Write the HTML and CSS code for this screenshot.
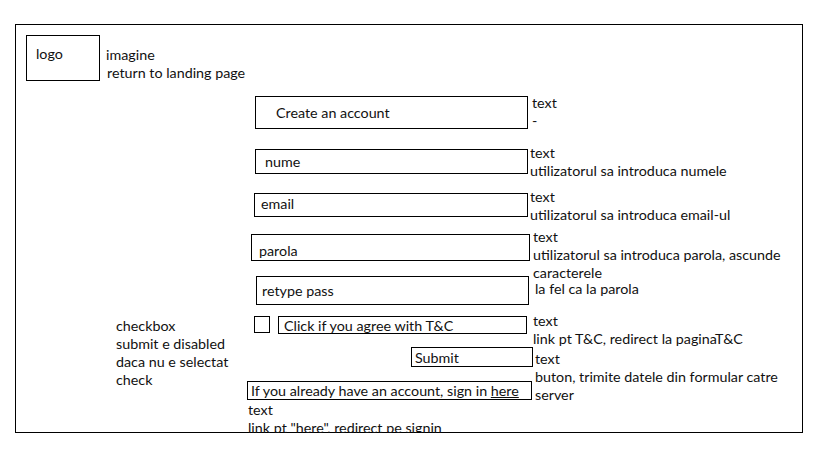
FILE: index.html
```html
<!DOCTYPE html>
<html lang="en">
<head>
<meta charset="UTF-8">
<meta name="viewport" content="width=device-width, initial-scale=1.0">
<link rel="stylesheet" href="styles.css">
<title>Create account - wireframe</title>
</head>
<body>
  <div class="frame">
    <div class="header">
      <div class="logo">logo</div>
      <div class="caption">
        <p>imagine</p>
        <p class="shift">return to landing page</p>
      </div>
    </div>

    <div class="sheet">
      <div class="row row-title">
        <div class="box box-title">Create an account</div>
        <div class="note note-title"><p>text</p><p>-</p></div>
      </div>

      <div class="row row-name">
        <div class="box box-name">nume</div>
        <div class="note note-name"><p>text</p><p>utilizatorul sa introduca numele</p></div>
      </div>

      <div class="row row-email">
        <div class="box box-email">email</div>
        <div class="note note-email"><p>text</p><p>utilizatorul sa introduca email-ul</p></div>
      </div>

      <div class="row row-pass">
        <div class="box box-pass">parola</div>
        <div class="note note-pass"><p>text</p><p>utilizatorul sa introduca parola, ascunde</p><p>caracterele</p></div>
      </div>

      <div class="row row-retype">
        <div class="box box-retype">retype pass</div>
        <div class="note note-retype"><p>la fel ca la parola</p></div>
      </div>

      <div class="aside">
        <p>checkbox</p>
        <p>submit e disabled</p>
        <p>daca nu e selectat</p>
        <p>check</p>
      </div>

      <div class="row row-terms">
        <div class="box box-check"></div>
        <div class="box box-terms">Click if you agree with T&amp;C</div>
        <div class="note note-terms"><p>text</p><p>link pt T&amp;C, redirect la paginaT&amp;C</p></div>
      </div>

      <div class="row row-submit">
        <div class="box box-submit">Submit</div>
        <div class="note note-submit"><p>text</p><p>buton, trimite datele din formular catre</p><p>server</p></div>
      </div>

      <div class="row row-signin">
        <div class="box box-signin"><span>If you already have an account, sign in <u>here</u></span></div>
        <div class="note note-signin"><p>text</p><p>link pt "here", redirect pe signin</p></div>
      </div>
    </div>
  </div>
</body>
</html>
```

FILE: styles.css
```css
body {
  margin: 0;
  background-color: #fff;
  font-family: Lato, "Open Sans", sans-serif;
  font-size: 14.3px;
  line-height: 18px;
  color: #111;
}

p {
  margin: 0;
  white-space: nowrap;
}

.frame {
  box-sizing: border-box;
  width: 788px;
  height: 409px;
  margin: 24px 0 0 15px;
  border: 1px solid #000;
}

/* top: logo + caption */
.header {
  display: flex;
  align-items: flex-start;
  padding: 10px 0 0 10px;
}

.logo {
  box-sizing: border-box;
  width: 74px;
  height: 46px;
  padding: 9px 0 0 9px;
  border: 1px solid #000;
}

.caption {
  margin: 11px 0 0 6px;
}

.shift {
  padding-left: 1px;
}

/* form rows */
.sheet {
  display: grid;
  grid-template-columns: 231px 1fr;
  grid-template-rows: 53px 44px 41px 42px 40px 31px 34px auto;
  margin-top: 14px;
}

.row {
  grid-column: 2;
  display: flex;
  align-items: flex-start;
}

.aside {
  grid-column: 1;
  grid-row: 6;
  padding: 1px 0 0 100px;
}

.box {
  box-sizing: border-box;
  display: flex;
  align-items: center;
  border: 1px solid #000;
  padding-top: 1px;
  white-space: nowrap;
}

.row-title { margin-left: 8px; }
.row-name { margin-left: 8px; }
.row-email { margin-left: 7px; }
.row-pass { margin-left: 4px; }
.row-retype { margin-left: 9px; }
.row-terms { margin-left: 7px; }
.row-submit { margin-left: 164px; }

.row-signin {
  flex-direction: column;
}

.box-title { width: 273px; height: 33px; padding-left: 20px; }
.box-name { width: 273px; height: 25px; padding-left: 9px; }
.box-email { width: 274px; height: 24px; padding: 0 0 2px 6px; }
.box-pass { width: 279px; height: 27px; padding: 7px 0 0 7px; }
.box-retype { width: 273px; height: 29px; padding-left: 5px; }
.box-check { width: 16px; height: 17px; }
.box-terms { width: 249px; height: 18px; margin-left: 8px; padding-left: 5px; }
.box-submit { width: 122px; height: 20px; padding-left: 3px; }
.box-signin { width: 285px; height: 19px; padding-left: 3px; }

.note-title { margin: -2px 0 0 4px; }
.note-name { margin: -5px 0 0 2px; }
.note-email { margin: -5px 0 0 2px; }
.note-pass { margin: -6px 0 0 3px; }
.note-retype { margin: 4px 0 0 6px; }
.note-terms { margin: -4px 0 0 6px; }
.note-submit { margin: 3px 0 0 2px; }
.note-signin { margin: 1px 0 0 1px; }
```
